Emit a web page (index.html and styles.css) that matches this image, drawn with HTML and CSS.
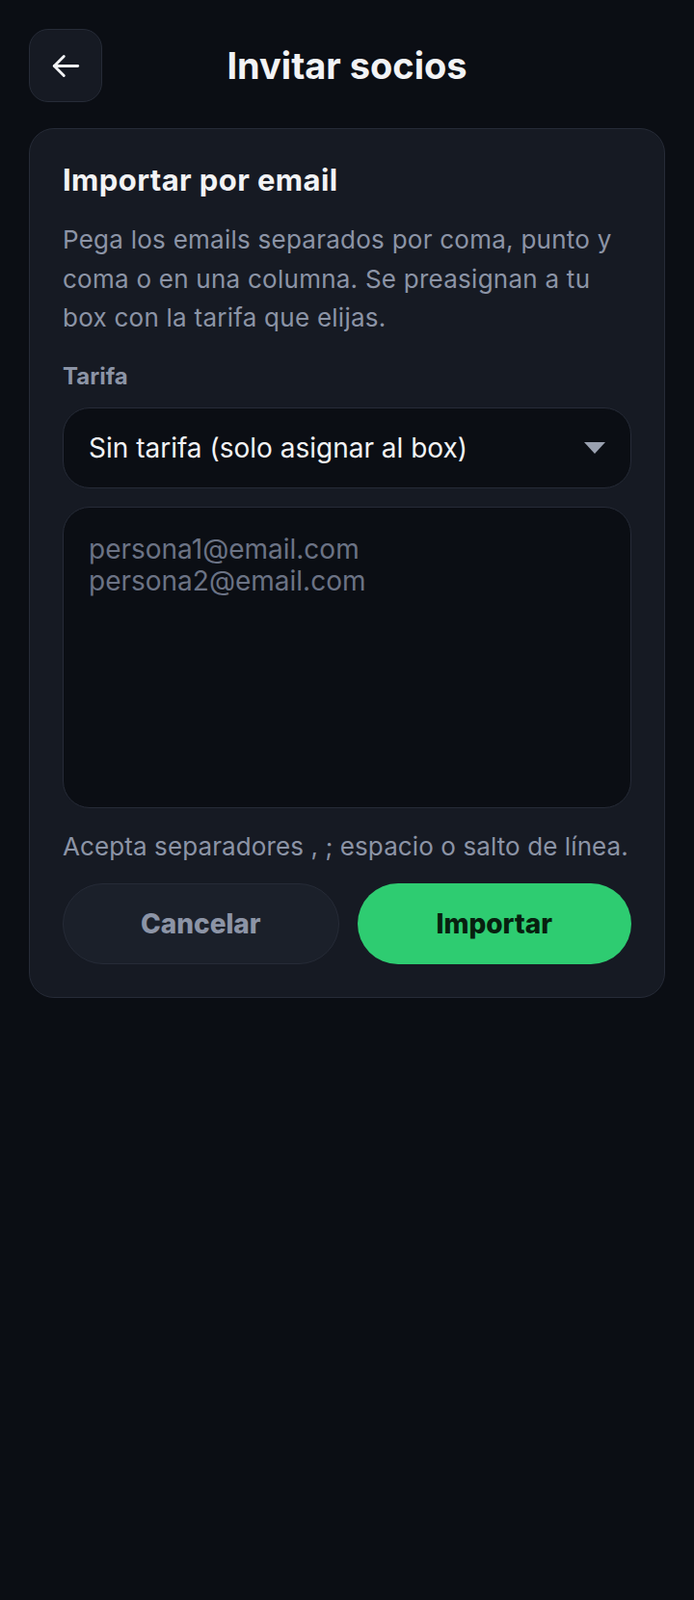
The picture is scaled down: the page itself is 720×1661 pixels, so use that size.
FILE: index.html
```html
<!DOCTYPE html>
<html lang="es">
<head>
  <meta charset="UTF-8" />
  <meta name="viewport" content="width=device-width, initial-scale=1.0"/>
  <title>Invitar socios</title>
  <link rel="stylesheet" href="styles.css">
</head>
<body>
  <div class="page">
    <header class="topbar">
      <button class="back-btn" aria-label="Volver">
        <svg width="31" height="27" viewBox="0 0 28 24" fill="none" stroke="#f2f3f5" stroke-width="2.6" stroke-linecap="round" stroke-linejoin="round">
          <path d="M25 12H3"/>
          <path d="M12 3l-9 9 9 9"/>
        </svg>
      </button>
      <h1>Invitar socios</h1>
      <span></span>
    </header>

    <section class="card">
      <h2>Importar por email</h2>
      <p class="desc">Pega los emails separados por coma, punto y coma o en una columna. Se preasignan a tu box con la tarifa que elijas.</p>

      <label class="label" for="tarifa">Tarifa</label>
      <div class="select-wrap">
        <select id="tarifa">
          <option>Sin tarifa (solo asignar al box)</option>
        </select>
        <svg class="caret" width="22" height="12" viewBox="0 0 22 12">
          <path d="M0 0h22L11 12z" fill="#9aa1b0"/>
        </svg>
      </div>

      <textarea class="emails" placeholder="persona1@email.com&#10;persona2@email.com"></textarea>

      <p class="hint">Acepta separadores , ; espacio o salto de línea.</p>

      <div class="actions">
        <button class="btn btn-cancel">Cancelar</button>
        <button class="btn btn-primary">Importar</button>
      </div>
    </section>
  </div>
</body>
</html>
```

FILE: styles.css
```css
body {
  margin: 0;
  font-family: Inter, "Noto Sans", sans-serif;
  background: #0b0e14;
  color: #f2f3f5;
  min-height: 100vh;
}
.page {
  padding: 30px;
}
.topbar {
  display: grid;
  grid-template-columns: 76px 1fr 76px;
  align-items: center;
  height: 76px;
}
.back-btn {
  width: 76px;
  height: 76px;
  border-radius: 20px;
  border: 1px solid #262b37;
  background: #161a23;
  display: flex;
  align-items: center;
  justify-content: center;
  padding: 0;
  cursor: pointer;
}
.topbar h1 {
  margin: 0;
  text-align: center;
  font-size: 38px;
  font-weight: 700;
}
.card {
  margin-top: 27px;
  background: #161a23;
  border: 1px solid #262b37;
  border-radius: 26px;
  padding: 34px;
}
.card h2 {
  margin: 0;
  font-size: 31px;
  line-height: 38px;
  font-weight: 700;
  letter-spacing: 0.4px;
}
.desc {
  margin: 23px 0 0;
  font-size: 26px;
  line-height: 40.5px;
  letter-spacing: 0.25px;
  color: #8c94a6;
}
.label {
  display: block;
  margin-top: 25px;
  font-size: 24px;
  line-height: 30px;
  font-weight: 700;
  color: #8c94a6;
}
.select-wrap {
  position: relative;
  margin-top: 17px;
}
.select-wrap select {
  width: 100%;
  height: 84px;
  appearance: none;
  background: #0b0e14;
  border: 1px solid #262b37;
  border-radius: 28px;
  padding: 0 60px 0 26px;
  font-family: inherit;
  font-size: 28px;
  color: #f2f3f5;
}
.caret {
  position: absolute;
  right: 27px;
  top: 36px;
  pointer-events: none;
}
.emails {
  display: block;
  box-sizing: border-box;
  width: 100%;
  height: 313px;
  margin-top: 19px;
  background: #0b0e14;
  border: 1px solid #262b37;
  border-radius: 28px;
  padding: 27px 26px;
  font-family: inherit;
  font-size: 28px;
  line-height: 33px;
  color: #f2f3f5;
  resize: none;
}
.emails::placeholder {
  color: #6b7385;
}
.hint {
  margin: 23px 0 0;
  font-size: 26px;
  line-height: 34px;
  letter-spacing: 0.1px;
  white-space: nowrap;
  color: #8c94a6;
}
.actions {
  display: flex;
  gap: 19px;
  margin-top: 21px;
}
.btn {
  flex: 1;
  height: 84px;
  border-radius: 42px;
  font-family: inherit;
  font-size: 28px;
  font-weight: 800;
  cursor: pointer;
}
.btn-cancel {
  background: #1b202a;
  border: 1px solid #262b37;
  color: #8c94a6;
}
.btn-primary {
  background: #2ecc71;
  border: none;
  color: #07200f;
}
```
